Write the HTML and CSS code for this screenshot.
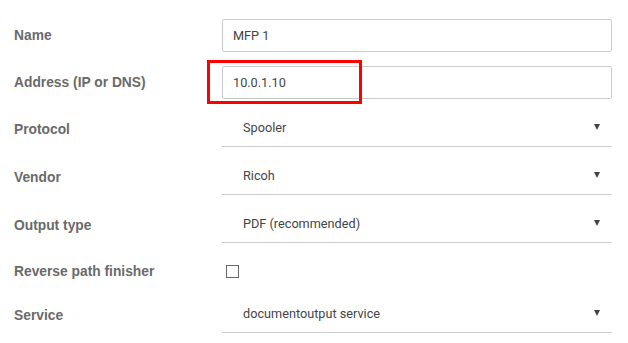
FILE: index.html
```html
<!DOCTYPE html>
<html>
<head>
<meta charset="utf-8">
<link rel="stylesheet" href="styles.css">
</head>
<body>
<form class="form">
  <div class="row row-input">
    <label class="label">Name</label>
    <div class="control"><div class="input">MFP 1</div></div>
  </div>
  <div class="row row-input">
    <label class="label">Address (IP or DNS)</label>
    <div class="control">
      <div class="input">10.0.1.10</div>
      <div class="highlight"></div>
    </div>
  </div>
  <div class="row row-select">
    <label class="label">Protocol</label>
    <div class="control"><div class="select"><span>Spooler</span><i class="caret"></i></div></div>
  </div>
  <div class="row row-select">
    <label class="label">Vendor</label>
    <div class="control"><div class="select"><span>Ricoh</span><i class="caret"></i></div></div>
  </div>
  <div class="row row-select">
    <label class="label">Output type</label>
    <div class="control"><div class="select"><span>PDF (recommended)</span><i class="caret"></i></div></div>
  </div>
  <div class="row row-check">
    <label class="label">Reverse path finisher</label>
    <div class="control"><span class="checkbox"></span></div>
  </div>
  <div class="row row-select">
    <label class="label">Service</label>
    <div class="control"><div class="select"><span>documentoutput service</span><i class="caret"></i></div></div>
  </div>
</form>
</body>
</html>
```
FILE: styles.css
```css
* { box-sizing: border-box; }
html, body { margin: 0; padding: 0; background: #fff; }
body { font-family: Roboto, "Liberation Sans", sans-serif; }
.form {
  padding: 12px 16px 0 14px;
}
.row {
  display: grid;
  grid-template-columns: 208px 390px;
  align-items: center;
}
.row-input { height: 47px; }
.row-select { height: 48px; }
.row-check { height: 42px; }
.label {
  font-family: "Liberation Sans", Arial, sans-serif;
  font-weight: bold;
  font-size: 13.8px;
  color: #6a6a6a;
}
.row-select .label { margin-bottom: 2px; }
.control { position: relative; }
.input {
  height: 33px;
  border: 1px solid #ccc;
  border-radius: 2px;
  padding: 0 10px;
  display: flex;
  align-items: center;
  font-size: 12.7px;
  color: #444;
}
.highlight {
  position: absolute;
  left: -15px;
  top: -6px;
  width: 155px;
  height: 44px;
  border: 3px solid #f00;
}
.row-select .control { align-self: start; }
.select {
  height: 41px;
  border-bottom: 1px solid #ccc;
  padding: 2px 12px 0 21px;
  display: flex;
  align-items: center;
  justify-content: space-between;
  font-size: 12.7px;
  color: #444;
}
.caret {
  width: 0;
  height: 0;
  border-left: 3.5px solid transparent;
  border-right: 3.5px solid transparent;
  border-top: 6px solid #444;
}
.checkbox {
  display: block;
  width: 13px;
  height: 13px;
  margin-left: 4px;
  border: 1px solid #666;
}
```
